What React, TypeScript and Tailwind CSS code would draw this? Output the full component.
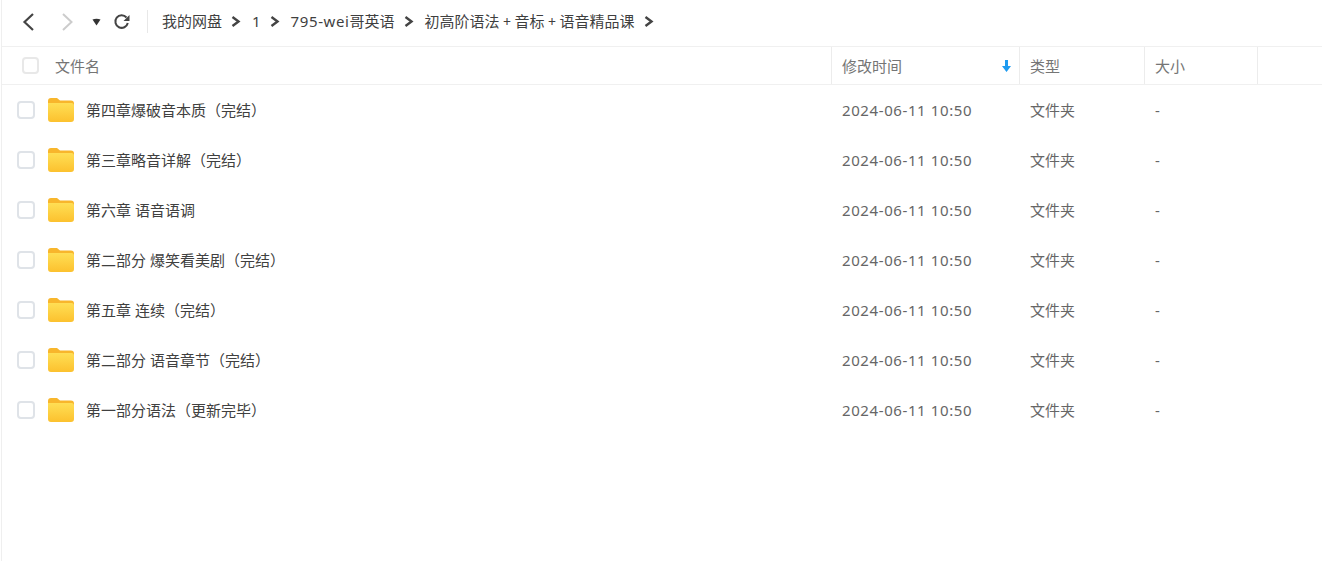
const folders = [
  '第四章爆破音本质（完结）',
  '第三章略音详解（完结）',
  '第六章 语音语调',
  '第二部分 爆笑看美剧（完结）',
  '第五章 连续（完结）',
  '第二部分 语音章节（完结）',
  '第一部分语法（更新完毕）',
];

function FolderIcon() {
  return (
    <svg width="26" height="24" viewBox="0 0 26 24" aria-hidden="true">
      <defs>
        <linearGradient id="folder-front" x1="0" y1="0" x2="0" y2="1">
          <stop offset="0" stopColor="#ffdf55" />
          <stop offset="1" stopColor="#fcc12e" />
        </linearGradient>
      </defs>
      <path d="M0 3a3 3 0 0 1 3-3h6l3 2.500h11a3 3 0 0 1 3 3V8H0z" fill="#f8b62c" />
      <path d="M0 5h23.500a2.500 2.500 0 0 1 2.500 2.500V21a3 3 0 0 1-3 3H3a3 3 0 0 1-3-3z" fill="url(#folder-front)" />
    </svg>
  );
}

function Crumb({ children }: { children: React.ReactNode }) {
  return (
    <div className="flex items-center">
      <span className="whitespace-nowrap">{children}</span>
      <svg className="ml-[9px] mr-[11px]" width="10" height="11" viewBox="0 0 10 11" fill="none" aria-hidden="true">
        <path d="M1.500 1l6 4.500-6 4.500" stroke="#444444" strokeWidth="2.400" />
      </svg>
    </div>
  );
}

function Plus() {
  return <span className="px-[3.500px] text-[14px]">+</span>;
}

export default function App() {
  return (
    <div
      className="ml-px h-[561px] w-[1321px] overflow-hidden border-l border-[#efefef] bg-white text-[15px] text-[#4b4b4b]"
      style={{ fontFamily: '"Noto Sans", "Noto Sans CJK SC", sans-serif' }}
    >
      {/* Toolbar */}
      <div className="flex h-[47px] items-center border-b border-[#f0f0f0] pb-[3px]">
        <svg className="ml-[20px]" width="13" height="18" viewBox="0 0 13 18" fill="none" aria-hidden="true">
          <path d="M11 1L2.500 9l8.500 8" stroke="#444444" strokeWidth="2.200" />
        </svg>
        <svg className="ml-[26px]" width="13" height="18" viewBox="0 0 13 18" fill="none" aria-hidden="true">
          <path d="M2 1l8.500 8L2 17" stroke="#cccccc" strokeWidth="2" />
        </svg>
        <svg className="ml-[18px]" width="9" height="8" viewBox="0 0 9 8" aria-hidden="true">
          <path d="M0.500 1.500q4-1.500 8 0L4.500 7.500z" fill="#333333" />
        </svg>
        <svg className="ml-[12px]" width="17" height="17" viewBox="0 0 17 17" fill="none" aria-hidden="true">
          <path d="M13.500 4.500A6.300 6.300 0 1 0 14.800 10" stroke="#444444" strokeWidth="2" />
          <path d="M16.500 2v6h-6z" fill="#444444" />
        </svg>
        <div className="ml-[17px] h-[23px] w-px bg-[#e8e8e8]" />
        <div className="ml-[14px] flex items-center text-[#3f3f3f]">
          <Crumb>我的网盘</Crumb>
          <Crumb>1</Crumb>
          <Crumb>
            <span className="tracking-[0.6px]">795-wei</span>哥英语
          </Crumb>
          <Crumb>
            初高阶语法
            <Plus />
            音标
            <Plus />
            语音精品课
          </Crumb>
        </div>
      </div>

      {/* Table header */}
      <div className="flex h-[38px] items-center border-b border-[#f0f0f0] text-[#757575]">
        <div className="flex w-[829px] items-center pl-[20px]">
          <div className="h-[17px] w-[17px] rounded-[4px] border-2 border-[#e8e8e8]" />
          <span className="ml-[16px] pt-[1px]">文件名</span>
        </div>
        <div className="flex h-full w-[188px] items-center justify-between border-l border-[#ececec] pl-[10px] pr-[8px]">
          <span className="pt-[1px]">修改时间</span>
          <svg width="9" height="12" viewBox="0 0 9 12" aria-hidden="true">
            <path d="M3 0h3v6h3L4.500 12 0 6h3z" fill="#1e9bf0" />
          </svg>
        </div>
        <div className="flex h-full w-[125px] items-center border-l border-[#ececec] pl-[10px] pt-[1px]">类型</div>
        <div className="flex h-full w-[113px] items-center border-l border-[#ececec] pl-[10px] pt-[1px]">大小</div>
        <div className="h-full flex-1 border-l border-[#ececec]" />
      </div>

      {/* Rows */}
      {folders.map((name) => (
        <div key={name} className="flex h-[50px] items-center">
          <div className="flex w-[829px] items-center pl-[15px]">
            <div className="h-[18px] w-[18px] rounded-[4px] border-2 border-[#dfe3e8]" />
            <div className="ml-[13px] flex">
              <FolderIcon />
            </div>
            <span className="ml-[12px] text-[#404040]">{name}</span>
          </div>
          <div className="w-[188px] pl-[11px] tracking-[0.6px] text-[#666666]">2024-06-11 10:50</div>
          <div className="w-[125px] pl-[11px] text-[#666666]">文件夹</div>
          <div className="pl-[11px] text-[#666666]">-</div>
        </div>
      ))}
    </div>
  );
}
